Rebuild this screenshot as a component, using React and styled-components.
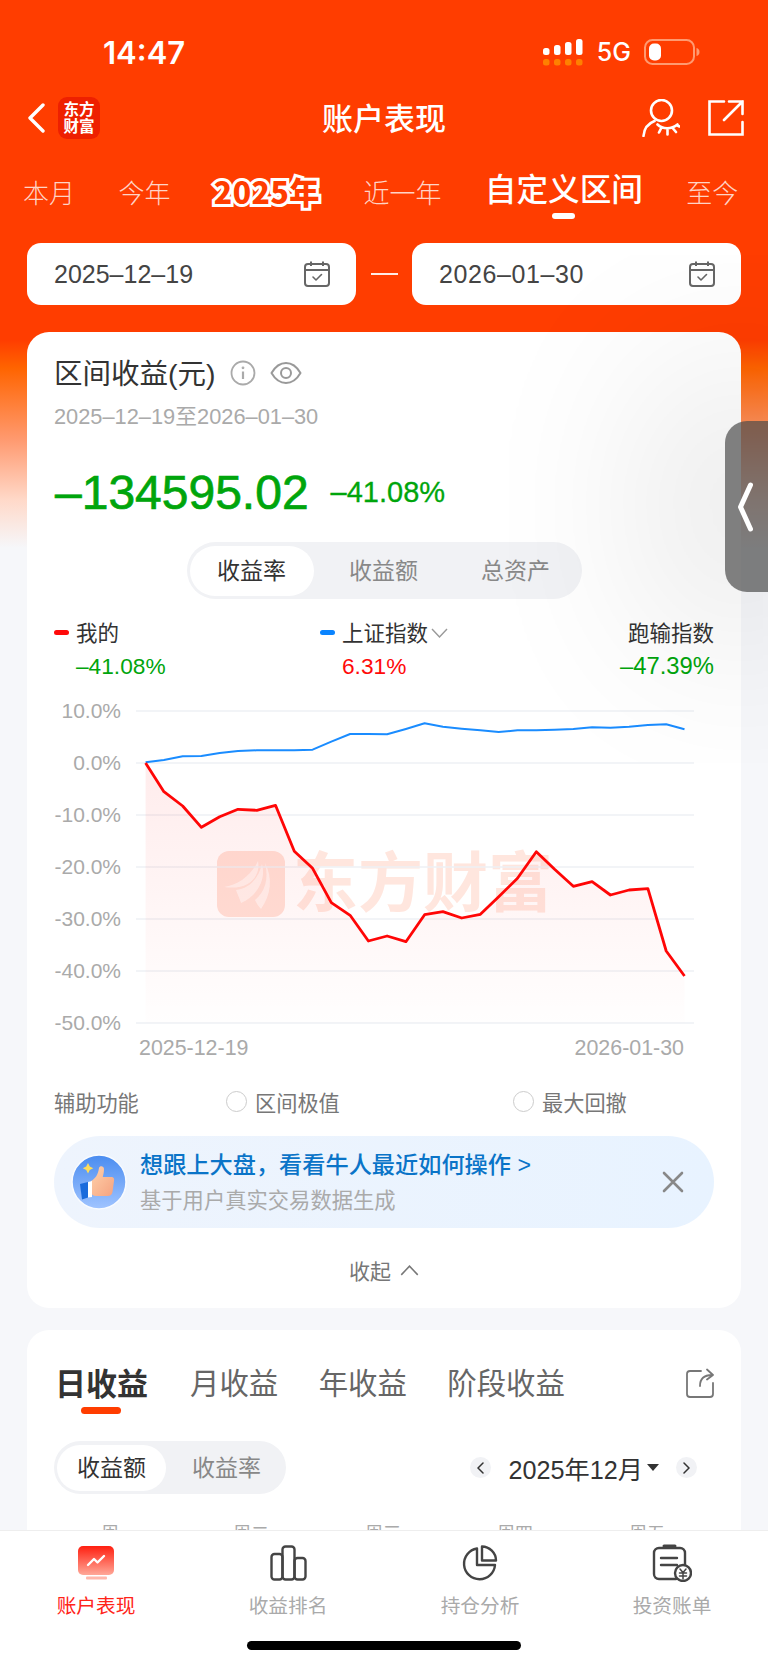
import React from "react";
import styled, { createGlobalStyle } from "styled-components";

const Global = createGlobalStyle`
  html, body { margin: 0; padding: 0; background: #f6f7fa; }
  * { box-sizing: border-box; }
`;

const SANS = `"Liberation Sans", "Noto Sans CJK SC", sans-serif`;

const Page = styled.div`
  position: relative;
  width: 768px;
  height: 1665px;
  overflow: hidden;
  font-family: ${SANS};
  background: linear-gradient(180deg, #ff3d00 0, #ff3d00 340px, #ff6400 368px, #ff9a70 440px, #ffd9c9 500px, #f6f7fa 548px);
`;

const StatusBar = styled.div`
  height: 90px;
  padding: 14px 68px 0 103px;
  display: flex;
  align-items: center;
  justify-content: space-between;
  color: #fff;
`;
const Time = styled.div`
  font-family: Inter, sans-serif;
  font-size: 31px;
  font-weight: 600;
`;
const StatusRight = styled.div`
  display: flex;
  align-items: center;
`;
const FiveG = styled.span`
  font-family: Inter, sans-serif;
  font-size: 25px;
  font-weight: 500;
  margin: 0 13px 0 14px;
`;

const Nav = styled.div`
  height: 56px;
  padding: 0 24px 0 27px;
  display: grid;
  grid-template-columns: 1fr auto 1fr;
  align-items: center;
  color: #fff;
`;
const NavLeft = styled.div`
  display: flex;
  align-items: center;
  gap: 13px;
`;
const NavRight = styled.div`
  display: flex;
  align-items: center;
  justify-content: flex-end;
  gap: 28px;
`;
const AppLogo = styled.div`
  width: 42px;
  height: 42px;
  border-radius: 9px;
  background: #ee2000;
  color: #fff;
  font-size: 15.5px;
  line-height: 17px;
  font-weight: 700;
  text-align: center;
  padding-top: 4px;
`;
const NavTitle = styled.div`
  font-size: 31px;
  font-weight: 500;
  margin-right: 3px;
  padding-bottom: 4px;
`;

const PeriodTabs = styled.div`
  padding: 10px 0 0 23px;
  height: 80px;
  display: flex;
  align-items: center;
  gap: 43.4px;
`;
const PeriodTab = styled.div`
  position: relative;
  white-space: nowrap;
  color: ${p => (p.$active ? "#fff" : "rgba(255,255,255,.78)")};
  font-size: ${p => (p.$active ? "31.6px" : "26px")};
  font-weight: ${p => (p.$active ? 500 : 300)};
  margin-bottom: ${p => (p.$active ? "8px" : "0")};
  ${p => p.$active && `
    &::after {
      content: "";
      position: absolute;
      left: 67px;
      bottom: -9px;
      width: 23px;
      height: 6px;
      border-radius: 3px;
      background: #fff;
    }
  `}
`;
const OutlinedTab = styled.div`
  white-space: nowrap;
  font-family: "Noto Sans CJK SC", sans-serif;
  font-size: 30.2px;
  font-weight: 900;
  letter-spacing: .5px;
  color: #ff3d00;
  -webkit-text-stroke: 6px #fff;
  paint-order: stroke fill;
  line-height: 34px;
`;

const DateRow = styled.div`
  margin: 17px 27px 0;
  display: flex;
  align-items: center;
  justify-content: space-between;
`;
const DateBox = styled.div`
  width: 329px;
  height: 62px;
  border-radius: 14px;
  background: #fff;
  padding: 0 26px 0 27px;
  display: flex;
  align-items: center;
  justify-content: space-between;
  font-size: 25px;
  letter-spacing: ${p => p.$ls || 0}px;
  color: #444;
`;
const DateDash = styled.div`
  width: 27px;
  height: 2px;
  background: rgba(255,255,255,.9);
`;

const Card = styled.div`
  margin: ${p => p.$top}px 27px 0;
  padding: ${p => p.$pad}px 27px 22px;
  background: #fff;
  border-radius: 22px;
`;
const TitleRow = styled.div`
  height: 30px;
  display: flex;
  align-items: center;
  font-size: 28.5px;
  color: #333;
`;
const TitleText = styled.span`
  margin-top: -4px;
`;
const InfoWrap = styled.span`
  display: flex;
  margin-left: 15px;
`;
const EyeWrap = styled.span`
  display: flex;
  margin-left: 14px;
`;
const SubDate = styled.div`
  margin-top: 16px;
  height: 26px;
  line-height: 26px;
  font-size: 21.8px;
  color: #aaa;
`;
const AmountRow = styled.div`
  margin-top: 32px;
  height: 60px;
  display: flex;
  align-items: center;
  color: #00a50c;
`;
const Amount = styled.div`
  font-size: 48px;
  font-weight: 400;
  -webkit-text-stroke: .7px #00a50c;
  margin-left: 1px;
`;
const AmountPct = styled.div`
  margin-left: 22px;
  font-size: 29px;
  -webkit-text-stroke: .3px #00a50c;
`;

const Segment = styled.div`
  display: flex;
  align-items: center;
  height: ${p => p.$h}px;
  width: ${p => p.$w}px;
  margin: ${p => p.$mt}px ${p => (p.$center ? "auto" : "0")} 0;
  padding: 0 3px;
  border-radius: 29px;
  background: #f1f2f5;
`;
const SegItem = styled.div`
  flex: ${p => (p.$active ? `0 0 ${p.$w}px` : "1")};
  height: calc(100% - 7px);
  display: flex;
  align-items: center;
  justify-content: center;
  padding: 0 0 3px ${p => p.$shift || 0}px;
  border-radius: 26px;
  font-size: 23px;
  color: ${p => (p.$active ? "#333" : "#888")};
  background: ${p => (p.$active ? "#fff" : "transparent")};
`;

const Legend = styled.div`
  margin-top: 20px;
  display: grid;
  grid-template-columns: 266px 1fr auto;
  grid-auto-rows: 28px;
  row-gap: 5px;
`;
const LegendLabel = styled.div`
  display: flex;
  align-items: center;
  justify-content: ${p => (p.$right ? "flex-end" : "flex-start")};
  padding-bottom: 4px;
  font-size: 21.5px;
  color: #333;
`;
const LegendDash = styled.span`
  width: 15px;
  height: 5px;
  border-radius: 3px;
  background: ${p => p.$c};
  margin: 2px 7px 0 0;
`;
const LegendChevron = styled.span`
  display: flex;
  margin: 3px 0 0 3px;
`;
const LegendValue = styled.div`
  padding-left: ${p => (p.$right ? 0 : 22)}px;
  text-align: ${p => (p.$right ? "right" : "left")};
  font-size: ${p => (p.$right ? 23.8 : 22.7)}px;
  line-height: 28px;
  color: ${p => p.$c};
`;

const Chart = styled.div`
  margin-top: 5px;
  display: grid;
  grid-template-columns: 67px 558px;
  column-gap: 15px;
`;
const YAxis = styled.div`
  display: flex;
  flex-direction: column;
`;
const YLabel = styled.div`
  height: 52px;
  line-height: 52px;
  text-align: right;
  font-size: 21px;
  color: #aaa;
`;
const Plot = styled.div`
  position: relative;
  height: 352px;
`;
const PlotSvg = styled.svg`
  position: relative;
  display: block;
`;
const Watermark = styled.div`
  position: absolute;
  left: 81px;
  top: 166px;
  display: flex;
  align-items: center;
  gap: 8px;
  color: #ffe6de;
  font-size: 65px;
  font-weight: 700;
  line-height: 66px;
  white-space: nowrap;
`;
const XAxis = styled.div`
  display: flex;
  justify-content: space-between;
  padding: 0 10px 0 3px;
  height: 22px;
  line-height: 22px;
  font-size: 21.4px;
  color: #aaa;
`;

const AuxRow = styled.div`
  margin-top: 27px;
  height: 28px;
  display: grid;
  grid-template-columns: 172px 287px 1fr;
  align-items: center;
  font-size: 21.2px;
  color: #777;
`;
const RadioItem = styled.div`
  display: flex;
  align-items: center;
  gap: 8px;
`;
const Radio = styled.span`
  width: 21px;
  height: 21px;
  border-radius: 50%;
  border: 1.5px solid #ccc;
  background: #fff;
`;

const Banner = styled.div`
  margin-top: 22px;
  height: 92px;
  border-radius: 46px;
  padding: 0 30px 0 17px;
  display: flex;
  align-items: center;
  background: linear-gradient(90deg, #eef4fd, #e8f3ff);
`;
const BannerText = styled.div`
  flex: 1;
  margin: 2px 0 0 13px;
`;
const BannerMain = styled.div`
  font-size: 23.2px;
  font-weight: 500;
  line-height: 36px;
  color: #0a74c8;
`;
const BannerSub = styled.div`
  font-size: 21.3px;
  line-height: 36px;
  color: #aaa;
`;

const Collapse = styled.div`
  margin-top: 27px;
  height: 30px;
  margin-bottom: 1px;
  display: flex;
  align-items: center;
  justify-content: center;
  gap: 9px;
  font-size: 21px;
  color: #777;
`;

const EarnTabs = styled.div`
  height: 34px;
  display: flex;
  align-items: center;
`;
const EarnTab = styled.div`
  position: relative;
  margin-right: ${p => (p.$active ? 42 : 40.5)}px;
  margin-left: ${p => (p.$active ? 1 : 0)}px;
  padding-bottom: 4px;
  font-size: ${p => (p.$active ? "31px" : "29.4px")};
  font-weight: ${p => (p.$active ? 700 : 400)};
  color: ${p => (p.$active ? "#333" : "#666")};
  white-space: nowrap;
  ${p => p.$active && `
    &::after {
      content: "";
      position: absolute;
      left: 26px;
      top: 48px;
      width: 40px;
      height: 7px;
      border-radius: 4px;
      background: #ff3d00;
    }
  `}
`;
const ShareWrap = styled.div`
  margin-left: auto;
  display: flex;
`;
const ControlRow = styled.div`
  display: flex;
  align-items: center;
  justify-content: space-between;
`;
const MonthPicker = styled.div`
  margin-top: 41px;
  display: flex;
  align-items: center;
  margin-right: 17px;
  font-size: 25.2px;
  color: #333;
`;
const RoundBtn = styled.span`
  width: 21px;
  height: 21px;
  border-radius: 50%;
  background: #f1f2f5;
  display: flex;
  align-items: center;
  justify-content: center;
`;
const MonthText = styled.span`
  margin: 0 4px 0 18px;
`;
const Caret = styled.span`
  width: 0;
  height: 0;
  border-left: 6.5px solid transparent;
  border-right: 6.5px solid transparent;
  border-top: 7px solid #333;
  margin-right: 17px;
`;
const WeekRow = styled.div`
  margin: 28px -11px 0 -1px;
  display: grid;
  grid-template-columns: repeat(5, 132px);
  justify-items: center;
  font-size: 18px;
  line-height: 24px;
  color: #aaa;
`;

const Handle = styled.div`
  position: absolute;
  right: 0;
  top: 421px;
  width: 43px;
  height: 171px;
  border-radius: 22px 0 0 22px;
  background: rgba(72,72,72,.7);
  box-shadow: -10px 0 190px 50px rgba(0,0,0,.12);
  display: flex;
  align-items: center;
  padding-left: 12px;
`;

const BottomBar = styled.div`
  position: absolute;
  left: 0;
  right: 0;
  bottom: 0;
  height: 135px;
  background: #fff;
  border-top: 1px solid #eee;
  display: grid;
  grid-template-columns: repeat(4, 192px);
`;
const BottomItem = styled.div`
  display: flex;
  flex-direction: column;
  align-items: center;
  padding-top: 13px;
`;
const BottomIcon = styled.div`
  height: 38px;
  display: flex;
  align-items: center;
  justify-content: center;
`;
const BottomLabel = styled.div`
  margin-top: 11px;
  font-size: 19.7px;
  line-height: 26px;
  color: ${p => (p.$active ? "#ff2318" : "#aaa")};
`;
const HomeBar = styled.div`
  position: absolute;
  left: 247px;
  bottom: 15px;
  width: 274px;
  height: 9px;
  border-radius: 5px;
  background: #000;
`;

/* ---------- drawings ---------- */
const Signal = () => (
  <svg width="40" height="27" viewBox="0 0 40 27">
    {[[0, 9, 7], [11, 6, 10], [22, 3, 13], [33, 0, 16]].map(([x, y, h]) => (
      <rect key={x} x={x} y={y} width="6.5" height={h} rx="2.5" fill="#fff" />
    ))}
    {[0, 11, 22, 33].map(x => (
      <rect key={x} x={x} y="20" width="6.5" height="6.5" rx="2.5" fill="#ff8000" />
    ))}
  </svg>
);
const Battery = () => (
  <svg width="56" height="26" viewBox="0 0 56 26">
    <rect x="1" y="1" width="49" height="24" rx="7.5" fill="none" stroke="#ff9a70" strokeWidth="2" />
    <rect x="5" y="4.5" width="12" height="17" rx="5" fill="#fff" />
    <path d="M52.5 9c2 .6 3 2 3 4s-1 3.4-3 4z" fill="#ff9a70" />
  </svg>
);
const Back = () => (
  <svg width="18" height="30" viewBox="0 0 18 30">
    <path d="M16 2 3 15l13 13" fill="none" stroke="#fff" strokeWidth="3.4" strokeLinecap="round" strokeLinejoin="round" />
  </svg>
);
const PersonEye = () => (
  <svg width="38" height="38" viewBox="0 0 38 38" fill="none" stroke="#fff" strokeWidth="2.6" strokeLinecap="round">
    <circle cx="19.5" cy="11.5" r="10.5" />
    <path d="M1.5 37c.5-7 4.500-12.500 11-15" />
    <path d="M15.500 25.500c5 5 14 5 20 0M19 29.500l-2 4M25.500 31v4.500M31 29.500l3 3.500M34.500 26l3 1.500" />
  </svg>
);
const External = () => (
  <svg width="36" height="36" viewBox="0 0 36 36" fill="none" stroke="#fff" strokeWidth="2.6" strokeLinecap="round">
    <path d="M16 1.500H1.500v33h33V22" />
    <path d="M21 1.500h13.500V14M34.500 1.500 16 20" />
  </svg>
);
const CalIcon = () => (
  <svg width="26" height="26" viewBox="0 0 26 26" fill="none" stroke="#666" strokeWidth="2">
    <rect x="1" y="3" width="24" height="22" rx="3" />
    <path d="M1 9h24M7 .5V5M19 .5V5" />
    <path d="M9 16l3 3 5.500-5.500" strokeWidth="1.600" strokeLinecap="round" strokeLinejoin="round" />
  </svg>
);
const Info = () => (
  <svg width="26" height="26" viewBox="0 0 26 26" fill="none" stroke="#aaa" strokeWidth="1.800">
    <circle cx="13" cy="13" r="11.500" />
    <path d="M13 11.500V19" strokeWidth="2.200" />
    <circle cx="13" cy="7.800" r=".6" strokeWidth="1.600" />
  </svg>
);
const Eye = () => (
  <svg width="32" height="24" viewBox="0 0 32 24" fill="none" stroke="#999" strokeWidth="2">
    <path d="M1.500 12C5 6 10 2 16 2s11 4 14.500 10C27 18 22 22 16 22S5 18 1.500 12z" strokeLinejoin="round" />
    <circle cx="16" cy="12" r="5" />
  </svg>
);
const Chevron = ({ dir = "down", c = "#999", w = 17, h = 10 }) => (
  <svg width={w} height={h} viewBox="0 0 17 10" fill="none" stroke={c} strokeWidth="1.400">
    <path d={dir === "down" ? "M1 1l7.500 8L16 1" : "M1 9l7.500-8L16 9"} />
  </svg>
);
const Thumb = () => (
  <svg width="56" height="56" viewBox="0 0 56 56">
    <defs>
      <linearGradient id="av" x1="0" y1="0" x2="0" y2="1">
        <stop offset="0" stopColor="#4a8cf0" />
        <stop offset="1" stopColor="#a0c4ff" />
      </linearGradient>
      <linearGradient id="skin" x1="0" y1="0" x2="1" y2="1">
        <stop offset="0" stopColor="#ffd3ad" />
        <stop offset="1" stopColor="#f5a27f" />
      </linearGradient>
    </defs>
    <circle cx="28" cy="28" r="27" fill="url(#av)" stroke="#f8fbff" strokeWidth="1.500" />
    <path d="M13 11l1.800 3.500 3.500 1.800-3.500 1.800L13 21.500l-1.800-3.400-3.400-1.800 3.400-1.800z" fill="#ffdc5a" transform="translate(4 -2)" />
    <path d="M20 27c4-2 7-6 8-13 .4-2.500 5-2.500 5 1 0 3-.6 5.500-1.200 8H40c3 0 3.500 2 3 4l-1.500 11c-.5 2.500-2 4-5 4H25c-3 0-5-2-5-4z" fill="url(#skin)" />
    <path d="M17 28l4-1v16l-4 .5z" fill="#fff" />
    <path d="M9 30l8-2v15.500l-6 2z" fill="#1a6bdc" />
  </svg>
);
const CloseX = () => (
  <svg width="22" height="22" viewBox="0 0 22 22" stroke="#888" strokeWidth="2.600" strokeLinecap="round">
    <path d="M2 2l18 18M20 2 2 20" />
  </svg>
);
const Share = () => (
  <svg width="28" height="30" viewBox="0 0 28 30" fill="none" stroke="#777" strokeWidth="1.800" strokeLinecap="round" strokeLinejoin="round">
    <path d="M15 3H4a3 3 0 0 0-3 3v20a3 3 0 0 0 3 3h20a3 3 0 0 0 3-3V15" />
    <path d="M14 18c0-7 4-11 12-11M21 1.500 27 7l-6 4.500" />
  </svg>
);
const Small = ({ left }) => (
  <svg width="7" height="12" viewBox="0 0 7 12" fill="none" stroke="#333" strokeWidth="1.500" strokeLinecap="round">
    <path d={left ? "M6 1 1 6l5 5" : "M1 1l5 5-5 5"} />
  </svg>
);
const HandleChevron = () => (
  <svg width="17" height="50" viewBox="0 0 17 50" fill="none" stroke="#fff" strokeWidth="5" strokeLinecap="round" strokeLinejoin="round">
    <path d="M13.500 3 3.500 25l10 22" />
  </svg>
);
const MarkLogo = () => (
  <svg width="68" height="66" viewBox="0 0 68 66">
    <rect width="68" height="66" rx="12" fill="#ffe1d8" />
    <path d="M7 36c14-2 27-11 34-26 3 14-8 30-34 26z" fill="#fff3ef" opacity=".9" />
    <path d="M24 52c-2-6-4-10-5-13 12-1 22-10 26-26 4 14-3 31-21 39z" fill="#fff3ef" opacity=".9" />
    <path d="M44 58c-3-3-5-7-6-9 10-8 14-21 10-37 8 15 6 32-4 46z" fill="#fff3ef" opacity=".9" />
  </svg>
);
const ActiveIcon = () => (
  <svg width="36" height="34" viewBox="0 0 36 34">
    <defs>
      <linearGradient id="act" x1="0" y1="0" x2="0" y2="1">
        <stop offset="0" stopColor="#ff1f10" />
        <stop offset="1" stopColor="#ffa898" />
      </linearGradient>
    </defs>
    <rect width="36" height="29" rx="5" fill="url(#act)" />
    <rect x="8" y="30.500" width="21" height="3" rx="1" fill="#ffb8ac" />
    <path d="M10 19l6-6 3.500 3.500L26 10" fill="none" stroke="#fff" strokeWidth="2.400" strokeLinejoin="round" strokeLinecap="round" />
  </svg>
);
const BarsIcon = () => (
  <svg width="37" height="36" viewBox="0 0 37 36" fill="none" stroke="#444" strokeWidth="2.400" strokeLinejoin="round">
    <rect x="1.500" y="9" width="11" height="25.500" rx="3" />
    <rect x="12.500" y="1.500" width="12" height="33" rx="3" />
    <rect x="24.500" y="13" width="11" height="21.500" rx="3" />
  </svg>
);
const PieIcon = () => (
  <svg width="36" height="36" viewBox="0 0 36 36" fill="none" stroke="#444" strokeWidth="2.400" strokeLinejoin="round">
    <path d="M15 3.500A15.500 15.500 0 1 0 33 20H15z" />
    <path d="M20 1.500c7.500 0 14 6.500 14 14H20z" />
  </svg>
);
const BillIcon = () => (
  <svg width="40" height="38" viewBox="0 0 40 38" fill="none" stroke="#444" strokeWidth="2.400" strokeLinecap="round">
    <path d="M24 35H7a5 5 0 0 1-5-5V9a5 5 0 0 1 5-5h21a5 5 0 0 1 5 5v11" />
    <path d="M12 2h11" strokeWidth="3" />
    <path d="M9 14h16M9 21h16" />
    <circle cx="31" cy="29" r="8" fill="#fff" />
    <path d="M28 25l3 3.500 3-3.500M27.500 29h7M27.500 32h7M31 28.500V35" strokeWidth="1.500" />
  </svg>
);

/* ---------- data ---------- */
const RED = [[259,219],[300,305],[342,348],[384,412],[425,380],[466,358],[508,361],[550,346],[592,484],[633,535],[675,638],[717,676],[758,753],[800,738],[842,755],[884,674],[925,665],[967,684],[1009,673],[1050,620],[1092,565],[1134,485],[1175,538],[1217,589],[1259,575],[1300,615],[1342,600],[1384,596],[1425,783],[1466,858]];
const BLUE = [[259,217],[300,210],[342,199],[384,198],[425,189],[466,183],[508,181],[550,180.5],[592,180.5],[633,179],[675,155],[717,132],[758,132],[800,133],[842,117],[884,100],[925,110],[967,116],[1009,121],[1050,126],[1092,121],[1134,121],[1175,119],[1217,117],[1259,112],[1300,113],[1342,110],[1384,105],[1425,103],[1466,118]];
const toPlot = ([x, y]) => [(30 + x / 2.24 - 136).toFixed(1), (690 + y / 3 - 685).toFixed(1)];
const line = pts => pts.map(toPlot).map(p => p.join(",")).join(" ");
const areaPts = (() => {
  const p = RED.map(toPlot);
  return `${p[0][0]},338 ${p.map(q => q.join(",")).join(" ")} ${p[p.length - 1][0]},338`;
})();
const Y_LABELS = ["10.0%", "0.0%", "-10.0%", "-20.0%", "-30.0%", "-40.0%", "-50.0%"];
const PERIODS_A = ["本月", "今年"];
const PERIODS_B = ["近一年"];

export default function App() {
  return (
    <Page>
      <Global />
      <StatusBar>
        <Time>14:47</Time>
        <StatusRight>
          <Signal />
          <FiveG>5G</FiveG>
          <Battery />
        </StatusRight>
      </StatusBar>
      <Nav>
        <NavLeft>
          <Back />
          <AppLogo>东方<br />财富</AppLogo>
        </NavLeft>
        <NavTitle>账户表现</NavTitle>
        <NavRight>
          <PersonEye />
          <External />
        </NavRight>
      </Nav>
      <PeriodTabs>
        {PERIODS_A.map(t => <PeriodTab key={t}>{t}</PeriodTab>)}
        <OutlinedTab>2025年</OutlinedTab>
        {PERIODS_B.map(t => <PeriodTab key={t}>{t}</PeriodTab>)}
        <PeriodTab $active>自定义区间</PeriodTab>
        <PeriodTab>至今</PeriodTab>
      </PeriodTabs>
      <DateRow>
        <DateBox>2025–12–19<CalIcon /></DateBox>
        <DateDash />
        <DateBox $ls={0.6}>2026–01–30<CalIcon /></DateBox>
      </DateRow>

      <Card $top={27} $pad={26}>
        <TitleRow>
          <TitleText>区间收益(元)</TitleText>
          <InfoWrap><Info /></InfoWrap>
          <EyeWrap><Eye /></EyeWrap>
        </TitleRow>
        <SubDate>2025–12–19至2026–01–30</SubDate>
        <AmountRow>
          <Amount>–134595.02</Amount>
          <AmountPct>–41.08%</AmountPct>
        </AmountRow>
        <Segment $h={57} $w={395} $mt={20} $center>
          <SegItem $active $w={124}>收益率</SegItem>
          <SegItem $shift={7}>收益额</SegItem>
          <SegItem $shift={6}>总资产</SegItem>
        </Segment>
        <Legend>
          <LegendLabel><LegendDash $c="#ff0a0a" />我的</LegendLabel>
          <LegendLabel><LegendDash $c="#0a84ff" />上证指数<LegendChevron><Chevron /></LegendChevron></LegendLabel>
          <LegendLabel $right>跑输指数</LegendLabel>
          <LegendValue $c="#00a50c">–41.08%</LegendValue>
          <LegendValue $c="#ff0a0a">6.31%</LegendValue>
          <LegendValue $c="#00a50c" $right>–47.39%</LegendValue>
        </Legend>
        <Chart>
          <YAxis>
            {Y_LABELS.map(l => <YLabel key={l}>{l}</YLabel>)}
          </YAxis>
          <div>
            <Plot>
              <Watermark><MarkLogo />东方财富</Watermark>
              <PlotSvg width="558" height="352" viewBox="0 0 558 352">
                <defs>
                  <linearGradient id="area" x1="0" y1="0" x2="0" y2="1">
                    <stop offset="0" stopColor="#ff1010" stopOpacity=".08" />
                    <stop offset="1" stopColor="#ff1010" stopOpacity=".005" />
                  </linearGradient>
                </defs>
                {Y_LABELS.map((l, i) => (
                  <line key={l} x1="0" x2="558" y1={26 + 52 * i} y2={26 + 52 * i} stroke="#eef0f5" strokeWidth="1.500" />
                ))}
                <polygon points={areaPts} fill="url(#area)" />
                <polyline points={line(BLUE)} fill="none" stroke="#1a8cff" strokeWidth="2" strokeLinejoin="round" />
                <polyline points={line(RED)} fill="none" stroke="#ff0606" strokeWidth="2.800" strokeLinejoin="round" />
              </PlotSvg>
            </Plot>
            <XAxis><span>2025-12-19</span><span>2026-01-30</span></XAxis>
          </div>
        </Chart>
        <AuxRow>
          <span>辅助功能</span>
          <RadioItem><Radio />区间极值</RadioItem>
          <RadioItem><Radio />最大回撤</RadioItem>
        </AuxRow>
        <Banner>
          <Thumb />
          <BannerText>
            <BannerMain>想跟上大盘，看看牛人最近如何操作 &gt;</BannerMain>
            <BannerSub>基于用户真实交易数据生成</BannerSub>
          </BannerText>
          <CloseX />
        </Banner>
        <Collapse>收起<Chevron dir="up" c="#777" w={19} h={11} /></Collapse>
      </Card>

      <Card $top={22} $pad={36}>
        <EarnTabs>
          <EarnTab $active>日收益</EarnTab>
          <EarnTab>月收益</EarnTab>
          <EarnTab>年收益</EarnTab>
          <EarnTab>阶段收益</EarnTab>
          <ShareWrap><Share /></ShareWrap>
        </EarnTabs>
        <ControlRow>
          <Segment $h={53} $w={232} $mt={41}>
            <SegItem $active $w={109}>收益额</SegItem>
            <SegItem $shift={4}>收益率</SegItem>
          </Segment>
          <MonthPicker>
            <RoundBtn><Small left /></RoundBtn>
            <MonthText>2025年12月</MonthText>
            <Caret />
            <RoundBtn><Small /></RoundBtn>
          </MonthPicker>
        </ControlRow>
        <WeekRow>
          <span>周一</span><span>周二</span><span>周三</span><span>周四</span><span>周五</span>
        </WeekRow>
      </Card>

      <Handle><HandleChevron /></Handle>

      <BottomBar>
        <BottomItem>
          <BottomIcon><ActiveIcon /></BottomIcon>
          <BottomLabel $active>账户表现</BottomLabel>
        </BottomItem>
        <BottomItem>
          <BottomIcon><BarsIcon /></BottomIcon>
          <BottomLabel>收益排名</BottomLabel>
        </BottomItem>
        <BottomItem>
          <BottomIcon><PieIcon /></BottomIcon>
          <BottomLabel>持仓分析</BottomLabel>
        </BottomItem>
        <BottomItem>
          <BottomIcon><BillIcon /></BottomIcon>
          <BottomLabel>投资账单</BottomLabel>
        </BottomItem>
      </BottomBar>
      <HomeBar />
    </Page>
  );
}
